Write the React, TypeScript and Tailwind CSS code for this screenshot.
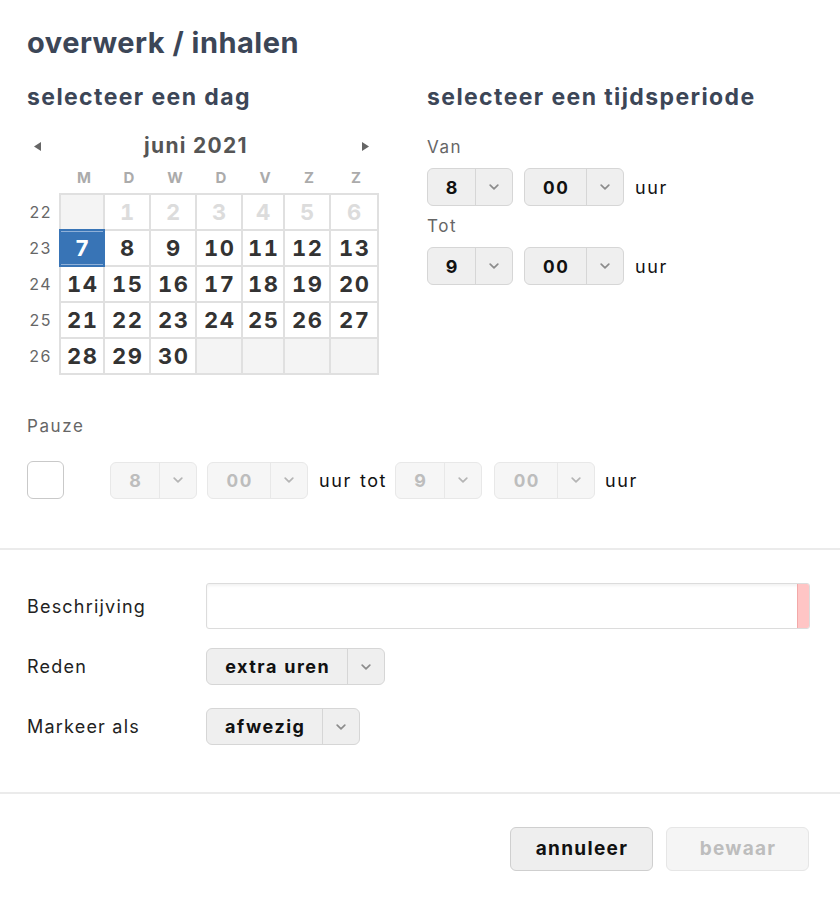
import type { ReactNode } from "react";

const WEEKS = [
  { nr: 22, days: [null, 1, 2, 3, 4, 5, 6] },
  { nr: 23, days: [7, 8, 9, 10, 11, 12, 13] },
  { nr: 24, days: [14, 15, 16, 17, 18, 19, 20] },
  { nr: 25, days: [21, 22, 23, 24, 25, 26, 27] },
  { nr: 26, days: [28, 29, 30, null, null, null, null] },
];

const DAY_NAMES = ["M", "D", "W", "D", "V", "Z", "Z"];
const COLS = "grid-cols-[42px_44px_44px_44px_40px_44px_46px]";

function Chevron({ color = "#8c8c8c" }: { color?: string }) {
  return (
    <svg width="10" height="6" viewBox="0 0 10 6" fill="none">
      <path
        d="M1.2 1.2L5 4.8l3.8-3.6"
        stroke={color}
        strokeWidth="1.7"
        strokeLinecap="round"
        strokeLinejoin="round"
      />
    </svg>
  );
}

function Select({
  value,
  left,
  disabled = false,
  tall = true,
}: {
  value: string;
  left: string;
  disabled?: boolean;
  tall?: boolean;
}) {
  return (
    <div
      className={`flex rounded-[6px] border ${tall ? "h-[38px]" : "h-[37px]"} ${
        disabled
          ? "bg-[#f6f6f6] border-[#e8e8e8] text-[#bdbdbd]"
          : "bg-[#efefef] border-[#d6d6d6] text-[#111]"
      }`}
    >
      <div
        className={`${left} flex items-center justify-center pl-[1.5px] text-[18px] font-bold tracking-[1.5px] tabular-nums`}
      >
        {value}
      </div>
      <div
        className={`w-[37px] flex items-center justify-center border-l ${
          disabled ? "border-[#e8e8e8]" : "border-[#d6d6d6]"
        }`}
      >
        <Chevron color={disabled ? "#b5b5b5" : "#8c8c8c"} />
      </div>
    </div>
  );
}

function FormRow({ label, children }: { label: string; children: ReactNode }) {
  return (
    <div className="flex items-center">
      <div className="w-[179px] text-[18px] tracking-[1.2px] text-[#222]">{label}</div>
      {children}
    </div>
  );
}

function Calendar() {
  return (
    <div className="w-[352px]">
      {/* month header */}
      <div className="flex items-center h-[24px] mt-[23px]">
        <div className="w-[20px] flex justify-center">
          <svg width="7" height="9" viewBox="0 0 7 9">
            <path d="M7 0L0 4.5 7 9z" fill="#666" />
          </svg>
        </div>
        <div className="flex-1 text-center pr-[14px] text-[21px] leading-[24px] font-bold tracking-[1.3px] text-[#555]">
          juni 2021
        </div>
        <div className="w-[20px] flex justify-center pr-[8px]">
          <svg width="7" height="9" viewBox="0 0 7 9">
            <path d="M0 0l7 4.5L0 9z" fill="#666" />
          </svg>
        </div>
      </div>

      {/* day names */}
      <div className={`grid ${COLS} gap-x-[2px] ml-[36px] mt-[10px] h-[20px]`}>
        {DAY_NAMES.map((d, i) => (
          <div key={i} className="text-center text-[15px] leading-[20px] font-bold text-[#ababab]">
            {d}
          </div>
        ))}
      </div>

      {/* grid */}
      <div className="flex mt-[5px]">
        <div className="w-[34px] flex flex-col pt-[2px] gap-y-[2px]">
          {WEEKS.map((w) => (
            <div
              key={w.nr}
              className="h-[34px] flex items-center justify-end pr-[7px] text-[16px] tracking-[1.5px] text-[#666]"
            >
              {w.nr}
            </div>
          ))}
        </div>
        <div className={`grid ${COLS} gap-[2px] p-[2px] bg-[#e0e0e0]`}>
          {WEEKS.map((w) =>
            w.days.map((d, i) => {
              const selected = d === 7;
              const past = d !== null && d < 7;
              return (
                <div
                  key={`${w.nr}-${i}`}
                  className={`h-[34px] flex items-center justify-center pl-[1.5px] text-[22px] font-bold tracking-[1.5px] tabular-nums ${
                    d === null
                      ? "bg-[#f4f4f4]"
                      : selected
                      ? "bg-[#3874b6] text-white outline-2 outline-[#3874b6] shadow-[inset_0_1px_0_#8fb0d8,inset_0_-1px_0_#8fb0d8]"
                      : past
                      ? "bg-white text-[#dcdcdc]"
                      : "bg-white text-[#333]"
                  }`}
                >
                  {d}
                </div>
              );
            })
          )}
        </div>
      </div>
    </div>
  );
}

export default function App() {
  return (
    <div className="w-[840px] h-[902px] bg-white font-['Inter',sans-serif] flex flex-col">
      <div className="px-[27px] pt-[26px]">
        <h1 className="text-[29px] leading-[34px] font-bold tracking-[0.5px] text-[#3c4657]">
          overwerk / inhalen
        </h1>

        <div className="flex mt-[23px]">
          <div>
            <h2 className="text-[23px] leading-[28px] font-bold tracking-[1.4px] text-[#3c4657]">
              selecteer een dag
            </h2>
            <Calendar />
          </div>

          <div className="ml-[48px]">
            <h2 className="text-[23px] leading-[28px] font-bold tracking-[1.4px] text-[#3c4657]">
              selecteer een tijdsperiode
            </h2>
            <div className="mt-[25px] text-[17px] leading-[22px] tracking-[1.6px] text-[#666]">Van</div>
            <div className="flex items-center gap-[11px] mt-[10px]">
              <Select value="8" left="w-[47px]" />
              <Select value="00" left="w-[61px]" />
              <span className="text-[18px] tracking-[1.6px] text-[#111]">uur</span>
            </div>
            <div className="mt-[9px] text-[17px] leading-[22px] tracking-[1.6px] text-[#666]">Tot</div>
            <div className="flex items-center gap-[11px] mt-[10px]">
              <Select value="9" left="w-[47px]" />
              <Select value="00" left="w-[61px]" />
              <span className="text-[18px] tracking-[1.6px] text-[#111]">uur</span>
            </div>
          </div>
        </div>

        <div className="mt-[40px] text-[17px] leading-[22px] tracking-[1.6px] text-[#666]">Pauze</div>
        <div className="flex items-center mt-[24px]">
          <div className="w-[37px] h-[38px] rounded-[6px] border-[1.5px] border-[#c9c9c9] bg-white" />
          <div className="ml-[46px] flex items-center text-[18px] tracking-[1.6px] text-[#111]">
            <Select value="8" left="w-[48px]" disabled tall={false} />
            <div className="w-[10px]" />
            <Select value="00" left="w-[62px]" disabled tall={false} />
            <span className="ml-[11px]">uur</span>
            <span className="ml-[8px]">tot</span>
            <div className="w-[8px]" />
            <Select value="9" left="w-[48px]" disabled tall={false} />
            <div className="w-[12px]" />
            <Select value="00" left="w-[62px]" disabled tall={false} />
            <span className="ml-[10px]">uur</span>
          </div>
        </div>
      </div>

      <div className="mt-[49px] h-[2px] bg-[#ebebeb]" />

      <div className="px-[27px] pr-[30px] pt-[33px] flex flex-col gap-[19px]">
        <FormRow label="Beschrijving">
          <div className="flex-1 h-[46px] flex rounded-[3px] border border-[#dcdcdc] shadow-[inset_0_2px_3px_rgba(0,0,0,0.05)] overflow-hidden">
            <div className="flex-1" />
            <div className="w-[12px] bg-[#ffc5c5] border-l border-[#f3a9a9]" />
          </div>
        </FormRow>
        <div className="flex flex-col gap-[23px]">
          <FormRow label="Reden">
            <Select value="extra uren" left="w-[140px]" tall={false} />
          </FormRow>
          <FormRow label="Markeer als">
            <Select value="afwezig" left="w-[115px]" tall={false} />
          </FormRow>
        </div>
      </div>

      <div className="mt-[47px] h-[2px] bg-[#ebebeb]" />

      <div className="flex justify-end gap-[13px] pr-[31px] pt-[33px]">
        <button className="w-[143px] h-[44px] rounded-[6px] border border-[#cfcfcf] bg-[#eeeeee] pl-[1px] text-[19px] font-bold tracking-[1.3px] text-[#111]">
          annuleer
        </button>
        <button className="w-[143px] h-[44px] rounded-[6px] border border-[#e6e6e6] bg-[#f5f5f5] pl-[1px] text-[19px] font-bold tracking-[1.3px] text-[#bdbdbd]">
          bewaar
        </button>
      </div>
    </div>
  );
}
